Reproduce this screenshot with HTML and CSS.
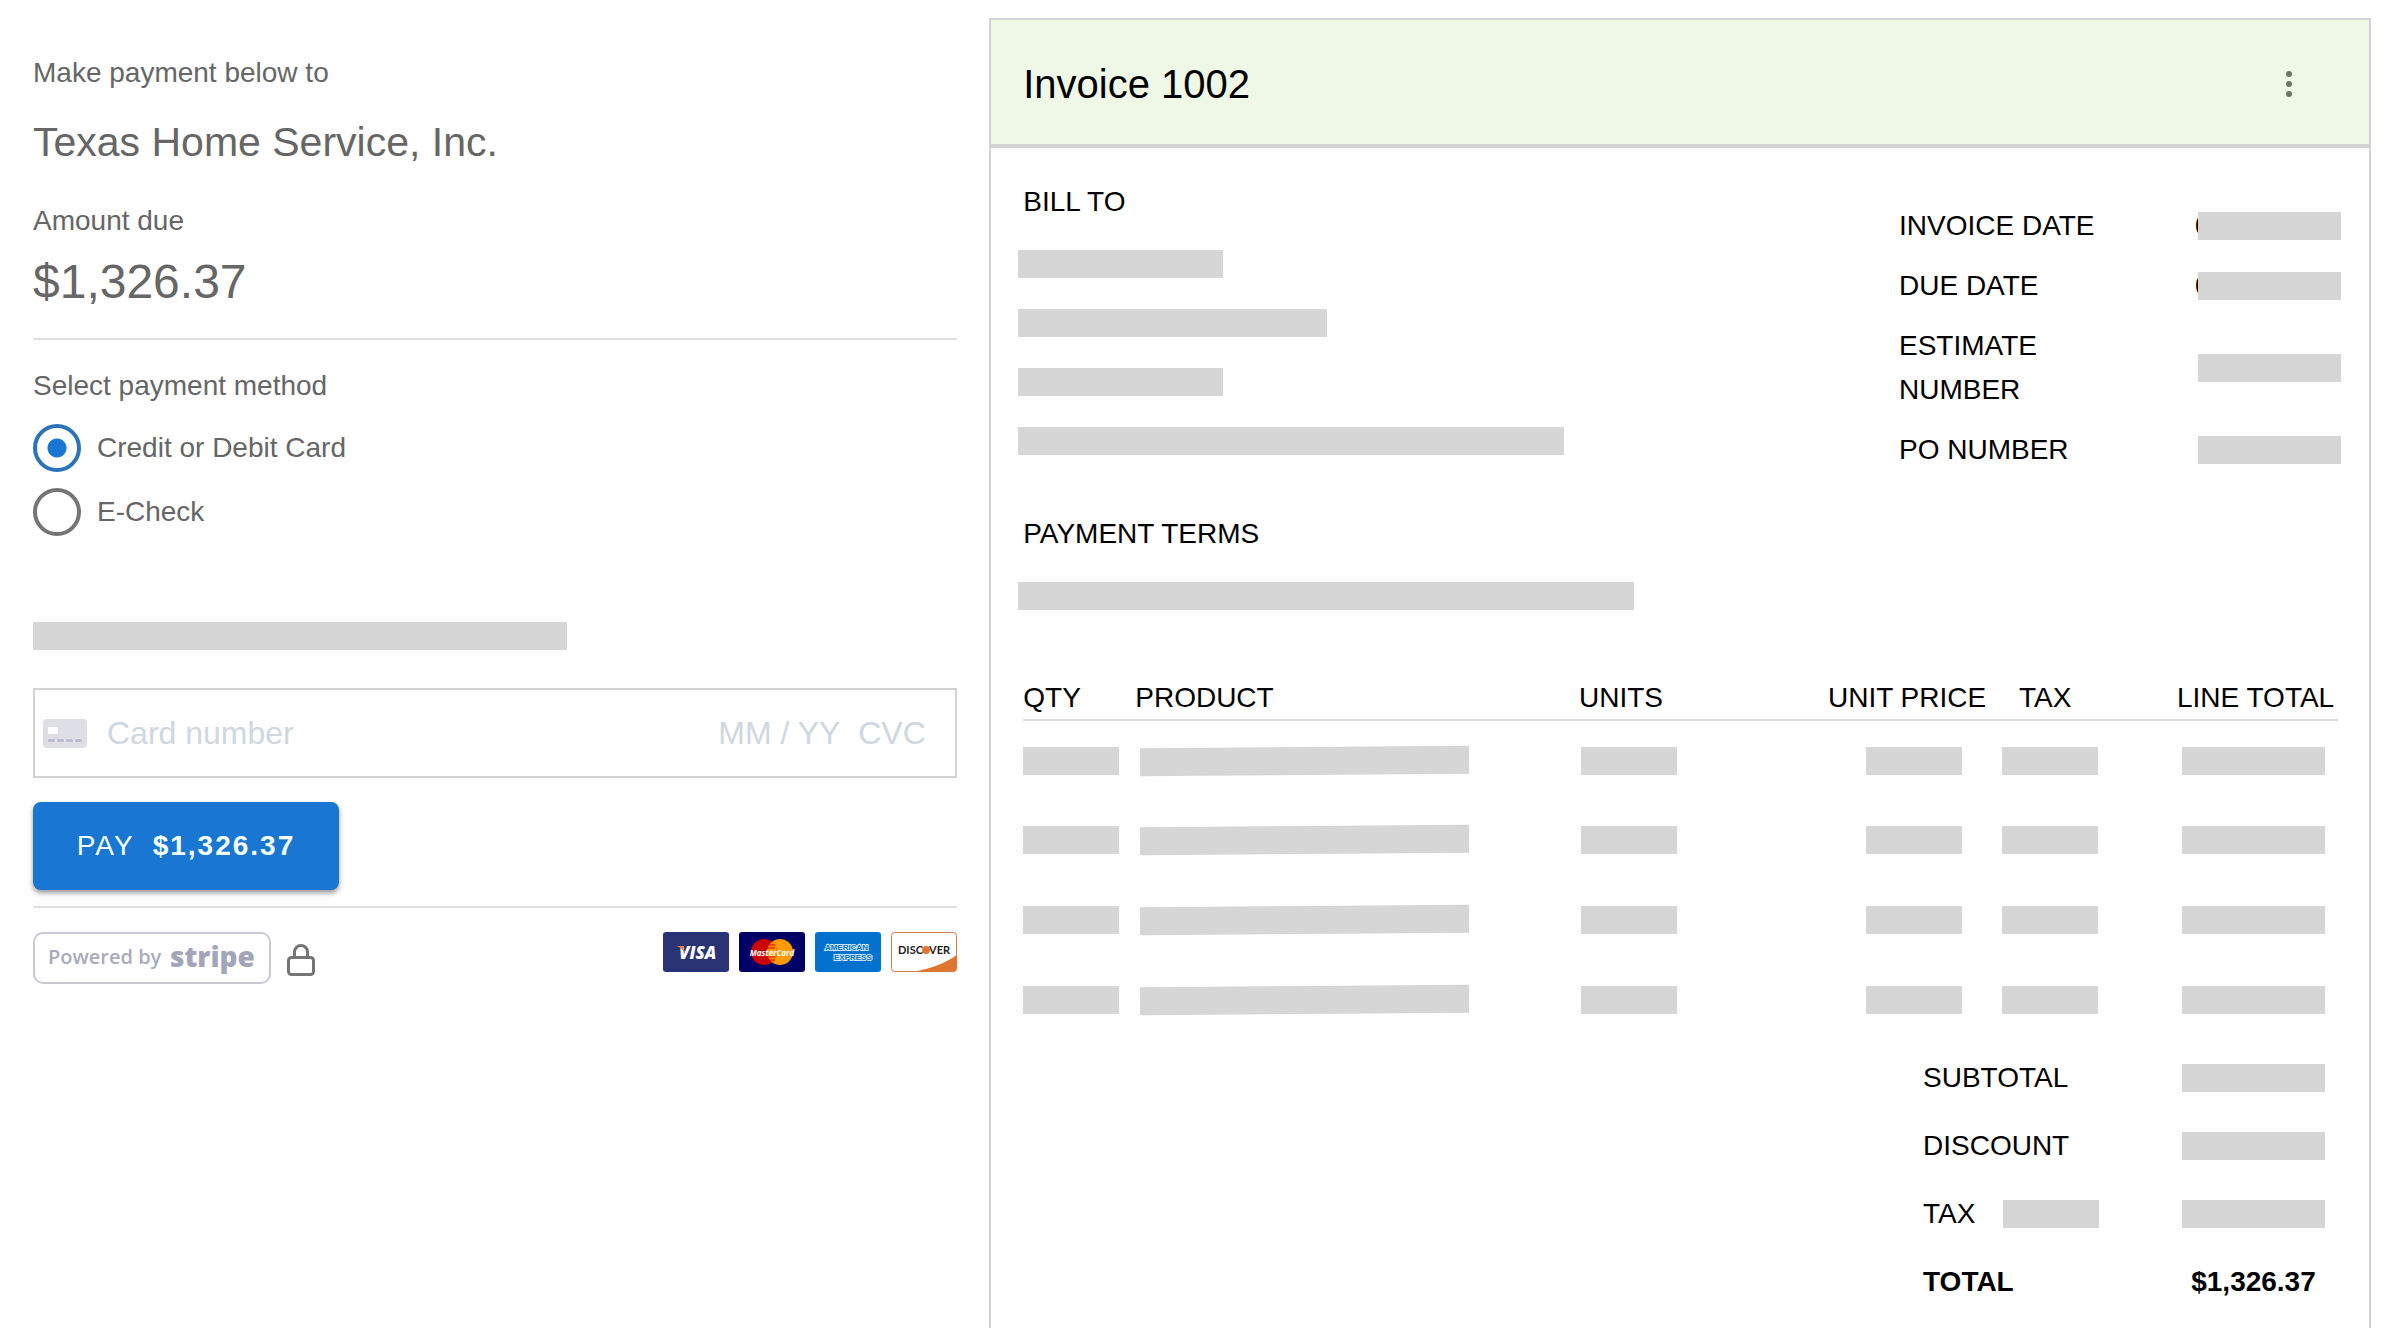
FILE: index.html
```html
<!DOCTYPE html>
<html lang="en">
<head>
  <meta charset="UTF-8" />
  <meta name="viewport" content="width=device-width, initial-scale=1.0"/>
  <title>Invoice 1002</title>
  <link rel="stylesheet" href="styles.css">
</head>
<body>
  <main class="page">
    <form class="payment">
      <p class="label">Make payment below to</p>
      <h1 class="company">Texas Home Service, Inc.</h1>
      <p class="label due-label">Amount due</p>
      <p class="amount">$1,326.37</p>
      <hr class="divider">

      <fieldset class="methods">
        <legend class="label">Select payment method</legend>
        <label class="method"><input type="radio" name="method" checked> Credit or Debit Card</label>
        <label class="method"><input type="radio" name="method"> E-Check</label>
      </fieldset>

      <div class="bar note"></div>

      <div class="card-field">
        <svg class="card-icon" viewBox="0 0 44 29">
          <rect width="44" height="29" rx="4" fill="#dedfe6"/>
          <rect x="5" y="8" width="10" height="7" rx="1" fill="#fff"/>
          <path d="M6.500 21.500h4M15.500 21.500h4M24.500 21.500h4M33.500 21.500h4" stroke="#b9bbcf" stroke-width="3" stroke-linecap="round"/>
        </svg>
        <input class="number" type="text" placeholder="Card number" aria-label="Card number">
        <input class="expiry" type="text" placeholder="MM / YY" aria-label="Expiry date">
        <input class="cvc" type="text" placeholder="CVC" aria-label="CVC">
      </div>

      <button class="pay" type="button"><span>PAY</span><strong>$1,326.37</strong></button>
      <hr class="divider pay-divider">

      <div class="footer">
        <a class="stripe" href="#" aria-label="Powered by stripe">
          <svg viewBox="0 0 238 52" width="238" height="52">
            <rect x="1" y="1" width="236" height="50" rx="9" fill="#fff" stroke="#c8c9d3" stroke-width="2"/>
            <text x="15" y="32" class="powered">Powered by</text>
            <text x="137" y="35" class="stripe-word">stripe</text>
          </svg>
        </a>
        <svg class="lock" viewBox="0 0 28 32" width="28" height="32">
          <rect x="1.500" y="13.500" width="25" height="17" rx="3" fill="none" stroke="#757575" stroke-width="3"/>
          <path d="M7.500 13V8a6.500 6.500 0 0 1 13 0v5" fill="none" stroke="#757575" stroke-width="3"/>
        </svg>
        <div class="cards">
          <svg viewBox="0 0 66 40" width="66" height="40">
            <rect width="66" height="40" rx="3" fill="#2a3375"/>
            <text x="16" y="27" class="visa">VISA</text>
            <path d="M13 14h7l2 7c-2-3-5-6-9-7z" fill="#e8833a"/>
          </svg>
          <svg viewBox="0 0 66 40" width="66" height="40">
            <rect width="66" height="40" rx="3" fill="#000066"/>
            <circle cx="41" cy="20" r="13" fill="#ff9900"/>
            <circle cx="25" cy="20" r="13" fill="#cc0000"/>
            <path d="M33 9.800a13 13 0 0 1 0 20.400a13 13 0 0 1 0-20.400z" fill="#ff9900"/>
            <path d="M30 13h6M29 16h7M29 25h7M30 28h6" stroke="#cc0000" stroke-width="1.200"/>
            <text x="33" y="24" class="mastercard">MasterCard</text>
          </svg>
          <svg viewBox="0 0 66 40" width="66" height="40">
            <rect width="66" height="40" rx="3" fill="#0272ce"/>
            <text x="10" y="18" class="amex">AMERICAN</text>
            <text x="19" y="28" class="amex">EXPRESS</text>
          </svg>
          <svg viewBox="0 0 66 40" width="66" height="40">
            <rect x=".5" y=".5" width="65" height="39" rx="3" fill="#fff" stroke="#d2804f"/>
            <path d="M22 39.500C40 37 55 31 65.500 23v13.500a3 3 0 0 1-3 3z" fill="#e0752f"/>
            <text x="7" y="22" class="discover">DISC</text>
            <circle cx="35" cy="18" r="4" fill="#e0752f"/>
            <text x="38" y="22" class="discover">VER</text>
          </svg>
        </div>
      </div>
    </form>

    <section class="invoice">
      <header class="invoice-header">
        <h2>Invoice 1002</h2>
        <button class="menu" type="button" aria-label="More options">
          <svg viewBox="0 0 6 26" width="6" height="26" fill="#6d7468">
            <circle cx="3" cy="3" r="3"/><circle cx="3" cy="13" r="3"/><circle cx="3" cy="23" r="3"/>
          </svg>
        </button>
      </header>

      <div class="invoice-body">
        <div class="summary">
          <div class="parties">
            <h3>BILL TO</h3>
            <div class="bars">
              <div class="bar line-short"></div>
              <div class="bar line-medium"></div>
              <div class="bar line-short"></div>
              <div class="bar line-long"></div>
            </div>
            <h3 class="terms">PAYMENT TERMS</h3>
            <div class="bars">
              <div class="bar line-terms"></div>
            </div>
          </div>
          <table class="meta">
            <tr><th scope="row">INVOICE DATE</th><td><div class="bar value date"></div></td></tr>
            <tr><th scope="row">DUE DATE</th><td><div class="bar value date"></div></td></tr>
            <tr><th scope="row">ESTIMATE NUMBER</th><td><div class="bar value"></div></td></tr>
            <tr><th scope="row">PO NUMBER</th><td><div class="bar value"></div></td></tr>
          </table>
        </div>

        <table class="items">
          <thead>
            <tr>
              <th class="qty">QTY</th>
              <th class="product">PRODUCT</th>
              <th class="units">UNITS</th>
              <th class="price">UNIT PRICE</th>
              <th class="tax">TAX</th>
              <th class="total">LINE TOTAL</th>
            </tr>
          </thead>
          <tbody>
            <tr>
              <td class="qty"><div class="bar small"></div></td>
              <td class="product"><div class="bar name"></div></td>
              <td class="units"><div class="bar small"></div></td>
              <td class="price"><div class="bar small"></div></td>
              <td class="tax"><div class="bar small"></div></td>
              <td class="total"><div class="bar value"></div></td>
            </tr>
            <tr>
              <td class="qty"><div class="bar small"></div></td>
              <td class="product"><div class="bar name"></div></td>
              <td class="units"><div class="bar small"></div></td>
              <td class="price"><div class="bar small"></div></td>
              <td class="tax"><div class="bar small"></div></td>
              <td class="total"><div class="bar value"></div></td>
            </tr>
            <tr>
              <td class="qty"><div class="bar small"></div></td>
              <td class="product"><div class="bar name"></div></td>
              <td class="units"><div class="bar small"></div></td>
              <td class="price"><div class="bar small"></div></td>
              <td class="tax"><div class="bar small"></div></td>
              <td class="total"><div class="bar value"></div></td>
            </tr>
            <tr>
              <td class="qty"><div class="bar small"></div></td>
              <td class="product"><div class="bar name"></div></td>
              <td class="units"><div class="bar small"></div></td>
              <td class="price"><div class="bar small"></div></td>
              <td class="tax"><div class="bar small"></div></td>
              <td class="total"><div class="bar value"></div></td>
            </tr>
          </tbody>
        </table>

        <table class="totals">
          <tr><th scope="row">SUBTOTAL</th><td><div class="bar value"></div></td></tr>
          <tr><th scope="row">DISCOUNT</th><td><div class="bar value"></div></td></tr>
          <tr><th scope="row"><div class="tax-row"><span>TAX</span><div class="bar small"></div></div></th><td><div class="bar value"></div></td></tr>
          <tr class="grand"><th scope="row">TOTAL</th><td>$1,326.37</td></tr>
        </table>
      </div>
    </section>
  </main>
</body>
</html>
```
FILE: styles.css
```css
* {
  box-sizing: border-box;
}

body {
  margin: 0;
  background: #fefefe;
  color: #000;
  font-family: "Liberation Sans", Arial, Helvetica, sans-serif;
  font-size: 28px;
  line-height: 44px;
}

h1,
h2,
h3,
p {
  margin: 0;
  font-weight: normal;
}

h3 {
  font-size: 28px;
}

table {
  border-collapse: collapse;
}

th,
td {
  padding: 0;
  font-weight: normal;
  text-align: left;
}

.page {
  display: flex;
  gap: 32px;
  min-height: 100vh;
  padding: 18px 35px 0 33px;
}

/* gray placeholder bars */
.bar {
  height: 28px;
  background: #d6d6d6;
}

.bar.small {
  width: 96px;
}

.bar.value {
  width: 143px;
}

.bar.name {
  width: 329px;
  transform: rotate(-0.4deg);
}

/* payment form */
.payment {
  flex: 1;
  min-width: 0;
  padding-top: 35px;
  color: #666;
}

.label {
  padding: 0;
  line-height: 40px;
}

.company {
  margin-top: 19px;
  font-size: 41px;
  line-height: 60px;
}

.due-label {
  margin-top: 29px;
}

.amount {
  margin-top: 11px;
  font-size: 48px;
  line-height: 60px;
}

.divider {
  height: 2px;
  margin: 26px 0;
  border: none;
  background: #e0e0e0;
}

.methods {
  margin: 0;
  padding: 0 0 0 0;
  border: none;
}

.methods legend {
  margin-bottom: 2px;
}

.method {
  display: flex;
  align-items: center;
  gap: 16px;
  height: 48px;
  margin-top: 16px;
}

.method input {
  appearance: none;
  width: 48px;
  height: 48px;
  margin: 0;
  border: 4px solid #757575;
  border-radius: 50%;
}

.method input:checked {
  border-color: #2b74ba;
  background: radial-gradient(circle, #1976d2 9px, transparent 10px);
}

.note {
  width: 534px;
  margin-top: 86px;
}

.card-field {
  display: flex;
  align-items: center;
  height: 90px;
  margin-top: 38px;
  padding-left: 8px;
  border: 2px solid #d3d3d3;
}

.card-icon {
  width: 44px;
  height: 29px;
  margin-right: 20px;
}

.card-field input {
  padding: 0;
  border: none;
  outline: none;
  background: none;
  color: #666;
  font: inherit;
  font-size: 32px;
}

.card-field input::placeholder {
  color: #cfd7df;
}

.number {
  flex: 1;
  min-width: 0;
}

.expiry {
  width: 140px;
}

.cvc {
  width: 97px;
}

.pay {
  display: flex;
  align-items: center;
  justify-content: center;
  gap: 18px;
  width: 306px;
  height: 88px;
  margin-top: 24px;
  border: none;
  border-radius: 8px;
  background: #1976d2;
  box-shadow: 0 3px 5px rgba(0, 0, 0, 0.4);
  color: #f4ffff;
  font: inherit;
  letter-spacing: 2px;
  cursor: pointer;
}

.pay-divider {
  margin: 16px 0 24px;
}

.footer {
  display: flex;
  align-items: flex-start;
}

.footer svg {
  display: block;
}

.footer .lock {
  margin: 12px 0 0 16px;
}

.cards {
  display: flex;
  gap: 10px;
  margin-left: auto;
}

.powered {
  fill: #a9abbd;
  font: 600 20px "Open Sans", sans-serif;
}

.stripe-word {
  fill: #a3a5b9;
  font: 800 28px "Open Sans", sans-serif;
}

.visa {
  fill: #fff;
  font: italic 800 17px "Open Sans", sans-serif;
}

.mastercard {
  fill: #fff;
  font: italic 700 8px "Open Sans", sans-serif;
  text-anchor: middle;
}

.amex {
  fill: #0272ce;
  stroke: #cfe5f7;
  stroke-width: 2px;
  paint-order: stroke;
  font: 700 8px "Liberation Sans", sans-serif;
}

.discover {
  fill: #222;
  font: 700 11px Lato, sans-serif;
}

/* invoice */
.invoice {
  width: 59.1%;
  border: 2px solid #d3d3d3;
  border-bottom: none;
}

.invoice-header {
  display: flex;
  align-items: center;
  justify-content: space-between;
  height: 128px;
  padding: 4px 64px 0 32px;
  border-bottom: 4px solid #d3d3d3;
  background: #eff8e7;
}

.invoice-header h2 {
  font-size: 40px;
}

.menu {
  display: flex;
  justify-content: center;
  width: 32px;
  padding: 0;
  border: none;
  background: none;
  cursor: pointer;
}

.invoice-body {
  padding: 32px 31px 0 32px;
}

.summary {
  display: flex;
  align-items: flex-start;
  justify-content: space-between;
}

.bars {
  display: flex;
  flex-direction: column;
  gap: 31px;
  margin: 26px 0 0 -5px;
}

.line-short {
  width: 205px;
}

.line-medium {
  width: 309px;
}

.line-long {
  width: 546px;
}

.line-terms {
  width: 616px;
}

.terms {
  margin-top: 57px;
}

.meta {
  width: 442px;
  margin: 16px -3px 0 0;
}

.meta th,
.meta td {
  padding: 8px 0;
}

.meta th {
  width: 299px;
  padding-right: 100px;
}

/* first digit of the date shows at the edge of its bar */
.date {
  position: relative;
}

.date::before {
  content: "0";
  position: absolute;
  z-index: -1;
  top: 0;
  left: -3px;
  line-height: 28px;
}

.items {
  width: 100%;
  margin-top: 67px;
  table-layout: fixed;
}

.items th {
  height: 42px;
  line-height: 42px;
  white-space: nowrap;
}

.items thead {
  border-bottom: 2px solid #dcdcdc;
}

.items td {
  height: 80px;
}

.qty {
  width: 112px;
}

.units {
  width: 249px;
}

.price {
  width: 174px;
}

.tax {
  width: 175px;
}

.total {
  width: 161px;
}

td.product,
td.total {
  padding-left: 5px;
}

td.units {
  padding-left: 2px;
}

td.price {
  padding-left: 38px;
}

th.tax {
  padding-left: 17px;
}

.totals {
  width: 415px;
  margin: 4px 0 0 auto;
}

.totals th,
.totals td {
  height: 68px;
}

.totals td {
  width: 161px;
  padding: 0 13px 0 5px;
  text-align: center;
}

.tax-row {
  display: flex;
  align-items: center;
}

.tax-row span {
  width: 80px;
}

.grand th,
.grand td {
  font-weight: bold;
}
```
